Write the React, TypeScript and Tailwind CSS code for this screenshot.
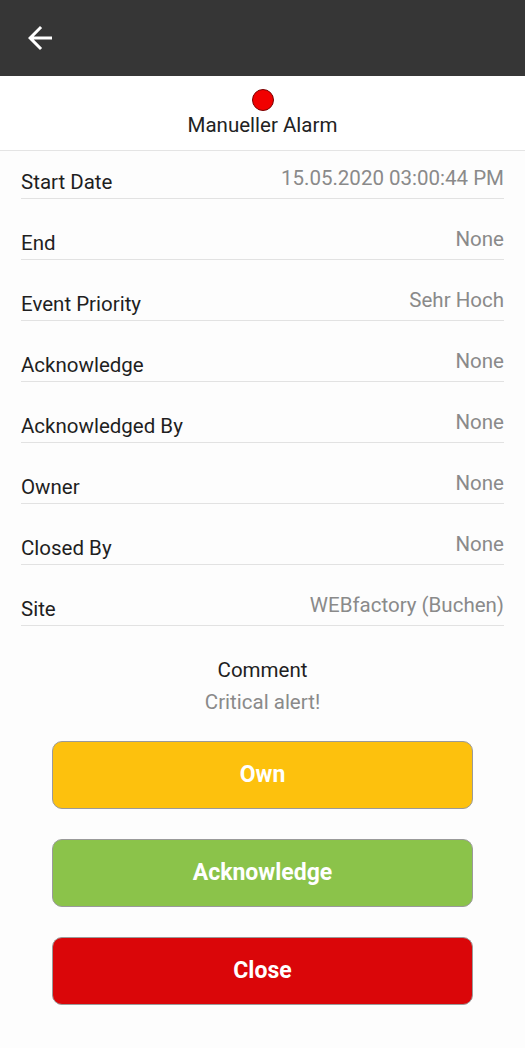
import React from "react";

interface Field {
  label: string;
  value: string;
}

const FIELDS: Field[] = [
  { label: "Start Date", value: "15.05.2020 03:00:44 PM" },
  { label: "End", value: "None" },
  { label: "Event Priority", value: "Sehr Hoch" },
  { label: "Acknowledge", value: "None" },
  { label: "Acknowledged By", value: "None" },
  { label: "Owner", value: "None" },
  { label: "Closed By", value: "None" },
  { label: "Site", value: "WEBfactory (Buchen)" },
];

const BUTTONS = [
  { label: "Own", className: "bg-[#fdc10d]" },
  { label: "Acknowledge", className: "bg-[#8bc34a]" },
  { label: "Close", className: "bg-[#da0609]" },
];

function BackArrow() {
  return (
    <svg width="36" height="36" viewBox="0 0 24 24" fill="#ffffff">
      <path d="M20 11H7.83l5.59-5.59L12 4l-8 8 8 8 1.41-1.41L7.83 13H20v-2z" />
    </svg>
  );
}

export default function App() {
  return (
    <div className="w-[525px] h-[1048px] bg-[#fdfdfd] font-['Roboto',sans-serif] overflow-hidden">
      {/* toolbar */}
      <div className="h-[76px] bg-[#363636] flex items-center pl-[22px] shadow-[0_1px_2px_rgba(0,0,0,0.3)]">
        <BackArrow />
      </div>

      {/* alarm header */}
      <div className="h-[75px] bg-white border-b border-[#e4e4e4] flex flex-col items-center pt-[13px]">
        <div className="w-[22px] h-[22px] rounded-full bg-[#f10000] border border-[#7a0000]" />
        <div className="text-[20.5px] leading-[24px] text-[#222] mt-[2px]">Manueller Alarm</div>
      </div>

      {/* details */}
      <div className="px-[21px] flex flex-col gap-[13px]">
        {FIELDS.map((f) => (
          <div
            key={f.label}
            className="h-[48px] border-b border-[#e2e2e2] flex justify-between"
          >
            <span className="text-[20.5px] leading-[24px] text-[#1f1f1f] mt-[19px]">{f.label}</span>
            <span className="text-[20.5px] leading-[24px] text-[#8a8a8a] mt-[15px]">{f.value}</span>
          </div>
        ))}
      </div>

      {/* comment */}
      <div className="flex flex-col items-center mt-[32px]">
        <div className="text-[20.5px] leading-[24px] text-[#1f1f1f]">Comment</div>
        <div className="text-[20.5px] leading-[24px] text-[#8a8a8a] mt-[8px]">Critical alert!</div>
      </div>

      {/* actions */}
      <div className="flex flex-col gap-[30px] px-[52px] mt-[27px]">
        {BUTTONS.map((b) => (
          <button
            key={b.label}
            className={`${b.className} h-[68px] w-full rounded-[10px] border border-[#9a9a9a] text-white font-bold text-[23px]`}
          >
            {b.label}
          </button>
        ))}
      </div>
    </div>
  );
}
